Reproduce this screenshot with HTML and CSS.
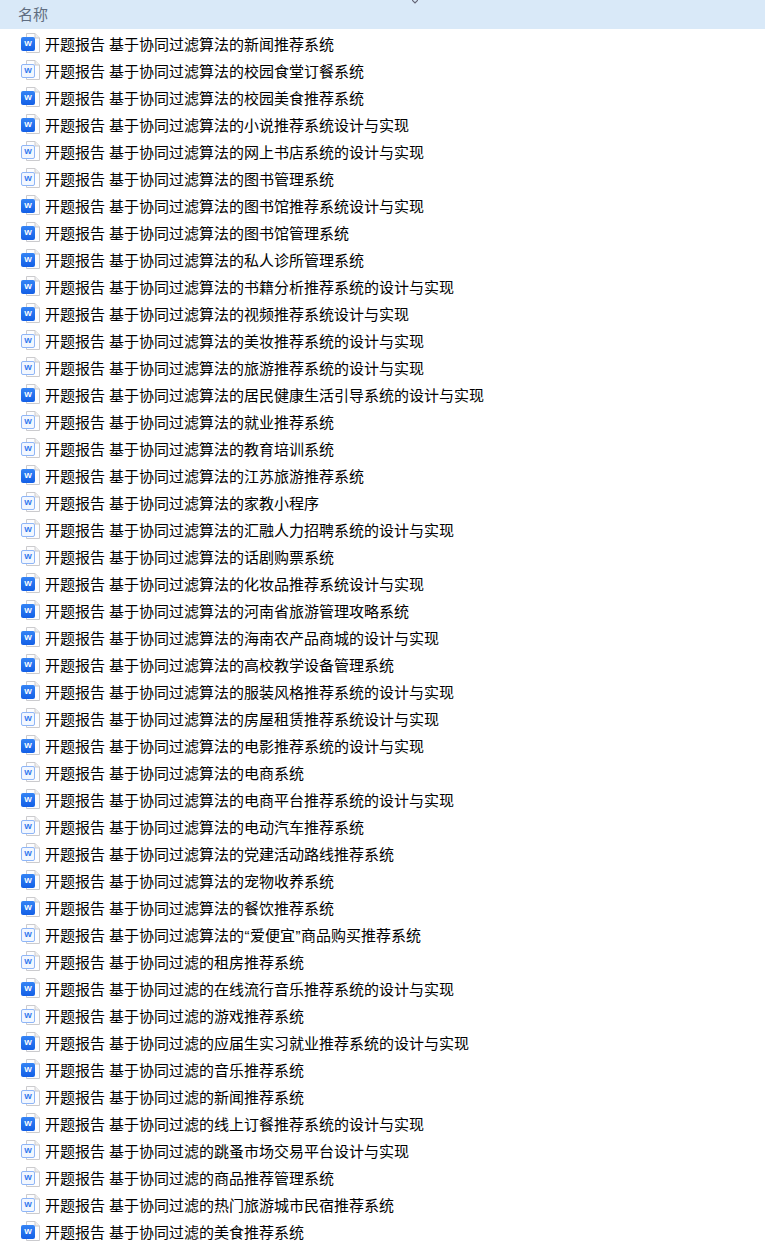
FILE: index.html
```html
<!DOCTYPE html>
<html lang="zh-CN">
<head>
  <meta charset="UTF-8">
  <meta name="viewport" content="width=device-width, initial-scale=1.0">
  <title>名称</title>
  <link rel="stylesheet" href="styles.css">
</head>
<body>
  <!-- blank page behind the Word badge -->
  <svg class="icon-defs" aria-hidden="true">
    <symbol id="sheet" viewBox="0 0 20 20">
      <path class="sheet" d="M6.500 .5H15L19.500 5V19.500H6.500Z"/>
      <path class="fold" d="M15 .5V5H19.500"/>
    </symbol>
  </svg>

  <div class="file-header">
    <span class="col-name">名称</span>
    <svg class="sort-arrow" width="6" height="4" viewBox="0 0 6 4" aria-hidden="true"><path d="M0 0L3 3L6 0"/></svg>
  </div>

  <ul class="file-list">
    <li class="file-row"><span class="file-icon"><svg><use href="#sheet"/></svg><b class="badge solid">W</b></span><span>开题报告 基于协同过滤算法的新闻推荐系统</span></li>
    <li class="file-row"><span class="file-icon"><svg><use href="#sheet"/></svg><b class="badge pale">W</b></span><span>开题报告 基于协同过滤算法的校园食堂订餐系统</span></li>
    <li class="file-row"><span class="file-icon"><svg><use href="#sheet"/></svg><b class="badge solid">W</b></span><span>开题报告 基于协同过滤算法的校园美食推荐系统</span></li>
    <li class="file-row"><span class="file-icon"><svg><use href="#sheet"/></svg><b class="badge solid">W</b></span><span>开题报告 基于协同过滤算法的小说推荐系统设计与实现</span></li>
    <li class="file-row"><span class="file-icon"><svg><use href="#sheet"/></svg><b class="badge pale">W</b></span><span>开题报告 基于协同过滤算法的网上书店系统的设计与实现</span></li>
    <li class="file-row"><span class="file-icon"><svg><use href="#sheet"/></svg><b class="badge pale">W</b></span><span>开题报告 基于协同过滤算法的图书管理系统</span></li>
    <li class="file-row"><span class="file-icon"><svg><use href="#sheet"/></svg><b class="badge solid">W</b></span><span>开题报告 基于协同过滤算法的图书馆推荐系统设计与实现</span></li>
    <li class="file-row"><span class="file-icon"><svg><use href="#sheet"/></svg><b class="badge solid">W</b></span><span>开题报告 基于协同过滤算法的图书馆管理系统</span></li>
    <li class="file-row"><span class="file-icon"><svg><use href="#sheet"/></svg><b class="badge solid">W</b></span><span>开题报告 基于协同过滤算法的私人诊所管理系统</span></li>
    <li class="file-row"><span class="file-icon"><svg><use href="#sheet"/></svg><b class="badge solid">W</b></span><span>开题报告 基于协同过滤算法的书籍分析推荐系统的设计与实现</span></li>
    <li class="file-row"><span class="file-icon"><svg><use href="#sheet"/></svg><b class="badge solid">W</b></span><span>开题报告 基于协同过滤算法的视频推荐系统设计与实现</span></li>
    <li class="file-row"><span class="file-icon"><svg><use href="#sheet"/></svg><b class="badge pale">W</b></span><span>开题报告 基于协同过滤算法的美妆推荐系统的设计与实现</span></li>
    <li class="file-row"><span class="file-icon"><svg><use href="#sheet"/></svg><b class="badge pale">W</b></span><span>开题报告 基于协同过滤算法的旅游推荐系统的设计与实现</span></li>
    <li class="file-row"><span class="file-icon"><svg><use href="#sheet"/></svg><b class="badge solid">W</b></span><span>开题报告 基于协同过滤算法的居民健康生活引导系统的设计与实现</span></li>
    <li class="file-row"><span class="file-icon"><svg><use href="#sheet"/></svg><b class="badge pale">W</b></span><span>开题报告 基于协同过滤算法的就业推荐系统</span></li>
    <li class="file-row"><span class="file-icon"><svg><use href="#sheet"/></svg><b class="badge pale">W</b></span><span>开题报告 基于协同过滤算法的教育培训系统</span></li>
    <li class="file-row"><span class="file-icon"><svg><use href="#sheet"/></svg><b class="badge solid">W</b></span><span>开题报告 基于协同过滤算法的江苏旅游推荐系统</span></li>
    <li class="file-row"><span class="file-icon"><svg><use href="#sheet"/></svg><b class="badge pale">W</b></span><span>开题报告 基于协同过滤算法的家教小程序</span></li>
    <li class="file-row"><span class="file-icon"><svg><use href="#sheet"/></svg><b class="badge pale">W</b></span><span>开题报告 基于协同过滤算法的汇融人力招聘系统的设计与实现</span></li>
    <li class="file-row"><span class="file-icon"><svg><use href="#sheet"/></svg><b class="badge pale">W</b></span><span>开题报告 基于协同过滤算法的话剧购票系统</span></li>
    <li class="file-row"><span class="file-icon"><svg><use href="#sheet"/></svg><b class="badge solid">W</b></span><span>开题报告 基于协同过滤算法的化妆品推荐系统设计与实现</span></li>
    <li class="file-row"><span class="file-icon"><svg><use href="#sheet"/></svg><b class="badge solid">W</b></span><span>开题报告 基于协同过滤算法的河南省旅游管理攻略系统</span></li>
    <li class="file-row"><span class="file-icon"><svg><use href="#sheet"/></svg><b class="badge solid">W</b></span><span>开题报告 基于协同过滤算法的海南农产品商城的设计与实现</span></li>
    <li class="file-row"><span class="file-icon"><svg><use href="#sheet"/></svg><b class="badge solid">W</b></span><span>开题报告 基于协同过滤算法的高校教学设备管理系统</span></li>
    <li class="file-row"><span class="file-icon"><svg><use href="#sheet"/></svg><b class="badge solid">W</b></span><span>开题报告 基于协同过滤算法的服装风格推荐系统的设计与实现</span></li>
    <li class="file-row"><span class="file-icon"><svg><use href="#sheet"/></svg><b class="badge pale">W</b></span><span>开题报告 基于协同过滤算法的房屋租赁推荐系统设计与实现</span></li>
    <li class="file-row"><span class="file-icon"><svg><use href="#sheet"/></svg><b class="badge solid">W</b></span><span>开题报告 基于协同过滤算法的电影推荐系统的设计与实现</span></li>
    <li class="file-row"><span class="file-icon"><svg><use href="#sheet"/></svg><b class="badge pale">W</b></span><span>开题报告 基于协同过滤算法的电商系统</span></li>
    <li class="file-row"><span class="file-icon"><svg><use href="#sheet"/></svg><b class="badge solid">W</b></span><span>开题报告 基于协同过滤算法的电商平台推荐系统的设计与实现</span></li>
    <li class="file-row"><span class="file-icon"><svg><use href="#sheet"/></svg><b class="badge pale">W</b></span><span>开题报告 基于协同过滤算法的电动汽车推荐系统</span></li>
    <li class="file-row"><span class="file-icon"><svg><use href="#sheet"/></svg><b class="badge pale">W</b></span><span>开题报告 基于协同过滤算法的党建活动路线推荐系统</span></li>
    <li class="file-row"><span class="file-icon"><svg><use href="#sheet"/></svg><b class="badge solid">W</b></span><span>开题报告 基于协同过滤算法的宠物收养系统</span></li>
    <li class="file-row"><span class="file-icon"><svg><use href="#sheet"/></svg><b class="badge solid">W</b></span><span>开题报告 基于协同过滤算法的餐饮推荐系统</span></li>
    <li class="file-row"><span class="file-icon"><svg><use href="#sheet"/></svg><b class="badge pale">W</b></span><span>开题报告 基于协同过滤算法的<span class="quote">“</span>爱便宜<span class="quote">”</span>商品购买推荐系统</span></li>
    <li class="file-row"><span class="file-icon"><svg><use href="#sheet"/></svg><b class="badge pale">W</b></span><span>开题报告 基于协同过滤的租房推荐系统</span></li>
    <li class="file-row"><span class="file-icon"><svg><use href="#sheet"/></svg><b class="badge solid">W</b></span><span>开题报告 基于协同过滤的在线流行音乐推荐系统的设计与实现</span></li>
    <li class="file-row"><span class="file-icon"><svg><use href="#sheet"/></svg><b class="badge pale">W</b></span><span>开题报告 基于协同过滤的游戏推荐系统</span></li>
    <li class="file-row"><span class="file-icon"><svg><use href="#sheet"/></svg><b class="badge solid">W</b></span><span>开题报告 基于协同过滤的应届生实习就业推荐系统的设计与实现</span></li>
    <li class="file-row"><span class="file-icon"><svg><use href="#sheet"/></svg><b class="badge solid">W</b></span><span>开题报告 基于协同过滤的音乐推荐系统</span></li>
    <li class="file-row"><span class="file-icon"><svg><use href="#sheet"/></svg><b class="badge pale">W</b></span><span>开题报告 基于协同过滤的新闻推荐系统</span></li>
    <li class="file-row"><span class="file-icon"><svg><use href="#sheet"/></svg><b class="badge solid">W</b></span><span>开题报告 基于协同过滤的线上订餐推荐系统的设计与实现</span></li>
    <li class="file-row"><span class="file-icon"><svg><use href="#sheet"/></svg><b class="badge pale">W</b></span><span>开题报告 基于协同过滤的跳蚤市场交易平台设计与实现</span></li>
    <li class="file-row"><span class="file-icon"><svg><use href="#sheet"/></svg><b class="badge pale">W</b></span><span>开题报告 基于协同过滤的商品推荐管理系统</span></li>
    <li class="file-row"><span class="file-icon"><svg><use href="#sheet"/></svg><b class="badge pale">W</b></span><span>开题报告 基于协同过滤的热门旅游城市民宿推荐系统</span></li>
    <li class="file-row"><span class="file-icon"><svg><use href="#sheet"/></svg><b class="badge solid">W</b></span><span>开题报告 基于协同过滤的美食推荐系统</span></li>
  </ul>
</body>
</html>
```

FILE: styles.css
```css
* {
  margin: 0;
  padding: 0;
  box-sizing: border-box;
}

body {
  font-family: "Liberation Sans", "Noto Sans CJK SC", sans-serif;
  font-size: 15px;
  background: #fff;
  color: #000;
  overflow: hidden;
}

.icon-defs {
  position: absolute;
  width: 0;
  height: 0;
}

.file-header {
  position: relative;
  height: 29px;
  padding: 0 0 3px 18px;
  display: flex;
  align-items: center;
  background: #d9e9f8;
  color: #5f6d80;
}

.sort-arrow {
  position: absolute;
  left: 412px;
  top: 0;
  fill: none;
  stroke: #667;
  stroke-width: 1.2;
}

.file-list {
  list-style: none;
  padding-top: 2px;
}

.file-row {
  height: 27px;
  padding-left: 20px;
  display: flex;
  align-items: center;
  gap: 5px;
  line-height: 27px;
  word-spacing: -.17px;
  white-space: nowrap;
}

.quote {
  margin: 0 .5px;
}

.file-icon {
  position: relative;
  width: 20px;
  height: 20px;
  flex-shrink: 0;
  margin-top: -3px;
}

.file-icon svg {
  display: block;
  width: 20px;
  height: 20px;
}

/* icon parts */
.sheet {
  fill: #fdfdfe;
  stroke: #cbcbce;
}

.fold {
  fill: #eeeeef;
  stroke: #cbcbce;
}

.badge {
  position: absolute;
  left: 1px;
  top: 4px;
  width: 14px;
  height: 14px;
  border-radius: 2px;
  font-family: "Liberation Sans", sans-serif;
  font-size: 8px;
  line-height: 14px;
  text-align: center;
}

.badge.solid {
  background: linear-gradient(#3584f5, #135fe6);
  color: #fff;
}

.badge.pale {
  background: #f2f7ff;
  border: 1px solid #8fb6f7;
  color: #2f76ee;
  line-height: 12px;
}
```
